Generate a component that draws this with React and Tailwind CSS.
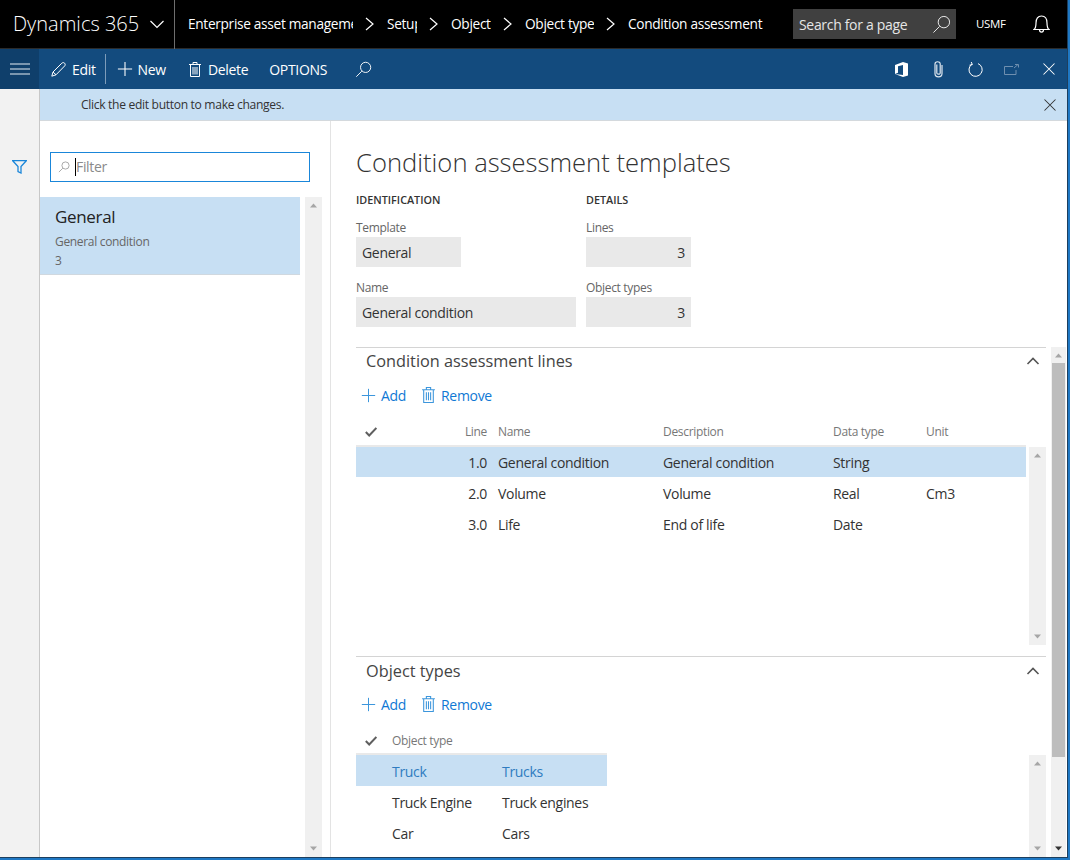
import React from "react";

const Mag = ({ size = 20, color = "currentColor", sw = 1.2 }) => (
  <svg width={size} height={size} viewBox="0 0 20 20" fill="none" stroke={color} strokeWidth={sw} className="shrink-0">
    <circle cx="12.5" cy="7.5" r="6" />
    <path d="M8 12 L1.5 18.5" />
  </svg>
);
const Plus = ({ size = 18, color = "currentColor" }) => (
  <svg width={size} height={size} viewBox="0 0 18 18" stroke={color} strokeWidth="1.2" className="shrink-0">
    <path d="M9 1 V17 M1 9 H17" />
  </svg>
);
const Trash = ({ color = "currentColor", w = 12, h = 15 }) => (
  <svg width={w} height={h} viewBox="0 0 12 15" fill="none" stroke={color} strokeWidth="1" className="shrink-0">
    <path d="M0 2.5 H12 M4 2.5 V0.5 H8 V2.5 M1.5 2.5 V14.5 H10.5 V2.5 M4 5 V12.5 M6 5 V12.5 M8 5 V12.5" />
  </svg>
);
const Pencil = () => (
  <svg width="15" height="15" viewBox="0 0 15 15" fill="none" stroke="#fff" strokeWidth="1" className="shrink-0">
    <path d="M0.8 14.2 L2 10 L10.8 1.2 C11.8 0.4 12.8 0.4 13.6 1.2 C14.4 2 14.4 3.2 13.6 4 L5 12.8 Z M2 10 L5 12.8" />
  </svg>
);
const Chevron = ({ dir = "right", size = 14, color = "#fff", sw = 1.2 }) => (
  <svg width={size} height={size} viewBox="0 0 14 14" fill="none" stroke={color} strokeWidth={sw} className="shrink-0">
    {dir === "right" && <path d="M3 1 L10 7 L3 13" />}
    {dir === "down" && <path d="M0.5 4 L7 10.5 L13.5 4" />}
    {dir === "up" && <path d="M1.5 10 L7 4.5 L12.5 10" />}
  </svg>
);
const Close = ({ size = 12, color = "#fff" }) => (
  <svg width={size} height={size} viewBox="0 0 12 12" stroke={color} strokeWidth="1.05" className="shrink-0">
    <path d="M0.5 0.5 L11.5 11.5 M11.5 0.5 L0.5 11.5" />
  </svg>
);
const Check = () => (
  <svg width="12" height="10" viewBox="0 0 12 10" fill="none" stroke="#5f5f5f" strokeWidth="2" className="shrink-0">
    <path d="M0.8 5 L4.2 8.5 L11.4 1" />
  </svg>
);
const Tri = ({ up = true, color = "#a6a6a6" }) => (
  <svg width="7" height="5" viewBox="0 0 7 5" fill={color} className="shrink-0">
    {up ? <path d="M3.5 0.5 L7 4.5 H0 Z" /> : <path d="M0 0.5 H7 L3.5 4.5 Z" />}
  </svg>
);

const Crumb = ({ w, children }) => (
  <>
    <span className={`${w} overflow-hidden whitespace-nowrap shrink-0`}>{children}</span>
    <Chevron />
  </>
);

const Scroll = ({ className = "" }) => (
  <div className={`w-[17px] bg-[#f0f0f0] flex flex-col items-center justify-between py-[6px] shrink-0 ${className}`}>
    <Tri />
    <Tri up={false} />
  </div>
);

const Field = ({ label, value, w, right }) => (
  <div className="flex flex-col">
    <label className="text-[12px] leading-[20px] h-[19px] text-[#666666]">{label}</label>
    <div className={`${w} h-[30px] bg-[#e9e9e9] flex items-center px-[6px] text-[14px] text-[#333333] ${right ? "justify-end pr-[6px]" : ""}`}>
      {value}
    </div>
  </div>
);

const Toolbar = ({ className = "" }) => (
  <div className={`h-[30px] shrink-0 flex items-center pl-[5px] text-[14px] text-[#1078d4] ${className}`}>
    <Plus size={15} color="#3c96dc" />
    <span className="ml-[5px]">Add</span>
    <span className="ml-[16px]"><Trash color="#3c96dc" w={13} h={16} /></span>
    <span className="ml-[6px]">Remove</span>
  </div>
);

const lines = [
  ["1.0", "General condition", "General condition", "String", ""],
  ["2.0", "Volume", "Volume", "Real", "Cm3"],
  ["3.0", "Life", "End of life", "Date", ""],
];

const LineRow = ({ r, sel }) => (
  <div className={`flex items-center text-[14px] text-[#333333] ${sel ? "h-[30px] mb-[1px] bg-[#c7dff3]" : "h-[31px]"}`}>
    <span className="w-[131px] text-right shrink-0">{r[0]}</span>
    <span className="w-[176px] pl-[11px] shrink-0">{r[1]}</span>
    <span className="w-[170px] shrink-0">{r[2]}</span>
    <span className="w-[93px] shrink-0">{r[3]}</span>
    <span>{r[4]}</span>
  </div>
);

const types = [
  ["Truck", "Trucks"],
  ["Truck Engine", "Truck engines"],
  ["Car", "Cars"],
];

export default function App() {
  return (
    <div className="w-[1070px] h-[860px] overflow-hidden border-r-2 border-b-2 border-[#1f78c4]">
      <div
        className="h-full flex flex-col bg-white border-r border-b border-[#1d3f5e]"
        style={{ fontFamily: '"Open Sans", "Noto Sans", sans-serif', letterSpacing: "-0.02em" }}
      >
        {/* top bar */}
        <header className="h-[49px] shrink-0 bg-black border-b border-[#2b2b2b] flex items-center text-white">
          <div className="w-[175px] h-[49px] shrink-0 border-r border-[#6e6e6e] flex items-center pl-[13px] gap-[11px]">
            <span className="text-[20px] font-light whitespace-nowrap tracking-normal">Dynamics 365</span>
            <Chevron dir="down" />
          </div>
          <nav className="flex items-center text-[13.7px] pl-[13px] gap-[10px] flex-1">
            <Crumb w="w-[165px]">Enterprise asset management</Crumb>
            <Crumb w="w-[30px]">Setup</Crumb>
            <Crumb w="w-[40px]">Object</Crumb>
            <Crumb w="w-[69px]">Object types</Crumb>
            <span className="whitespace-nowrap">Condition assessment</span>
          </nav>
          <div className="w-[163px] h-[30px] bg-[#404040] flex items-center justify-between pl-[6px] pr-[5px] text-[14px] text-[#e6e6e6] mr-[20px] shrink-0">
            <span>Search for a page</span>
            <Mag size={19} color="#f0f0f0" sw={1} />
          </div>
          <span className="text-[11.5px] w-[30px] mr-[27px] shrink-0">USMF</span>
          <svg width="17" height="19" viewBox="0 0 17 19" fill="none" stroke="#fff" strokeWidth="1.2" className="mr-[17px] shrink-0">
            <path d="M1 14.5 C3 13 3 11 3 8 C3 4 5 1 8.5 1 C12 1 14 4 14 8 C14 11 14 13 16 14.5 Z M6.5 14.5 C6.5 18 10.5 18 10.5 14.5" />
          </svg>
        </header>

        {/* command bar */}
        <div className="h-[40px] shrink-0 bg-[#134b7e] flex items-center text-white text-[14px]">
          <div className="w-[39px] h-full bg-[#0f3f6b] flex items-center justify-center shrink-0">
            <svg width="20" height="12" viewBox="0 0 20 12" stroke="#e6edf4" strokeWidth="1.2"><path d="M0 1 H20 M0 6 H20 M0 11 H20" /></svg>
          </div>
          <div className="flex items-center pl-[12px] gap-[6px]">
            <Pencil />
            <span>Edit</span>
          </div>
          <div className="w-px h-[30px] bg-[#7d9cba] ml-[9px] mr-[11px]" />
          <Plus size={16} color="#fff" />
          <span className="ml-[5px]">New</span>
          <span className="ml-[23px]"><Trash color="#fff" /></span>
          <span className="ml-[7px]">Delete</span>
          <span className="ml-[21px]">OPTIONS</span>
          <span className="ml-[28px]"><Mag size={17} color="#fff" sw={1.1} /></span>
          <div className="flex-1" />
          <svg width="13" height="15" viewBox="0 0 13 15" fill="#fff" className="mr-[26px] shrink-0">
            <path d="M0 3 L8 0 L13 1.5 V13.5 L8 15 L0 12 L8 13 V3 L3 4.2 V10.8 L0 12 Z" />
          </svg>
          <svg width="9" height="17" viewBox="0 0 9 17" fill="none" stroke="#dfe7ef" strokeWidth="1.2" className="mr-[25px] shrink-0">
            <path d="M2.8 3.5 V12 C2.8 13.6 6.2 13.6 6.2 12 V3 C6.2 0 1 0 1 3 V12.5 C1 17 8 17 8 12.5 V4" />
          </svg>
          <svg width="15" height="15" viewBox="0 0 15 15" fill="none" stroke="#fff" strokeWidth="1" className="mr-[21px] shrink-0">
            <path d="M4 2.2 A6.6 6.6 0 1 0 10 1.6 M3.2 0 L4.4 2.6 L1.5 3.2" />
          </svg>
          <svg width="15" height="11" viewBox="0 0 15 11" fill="none" stroke="#6f8faf" strokeWidth="1" className="mr-[24px] shrink-0">
            <path d="M9 2.5 H0.5 V10.5 H12 V6 M10 4 L14 0.5 M11 0.5 H14.5 V3.5" />
          </svg>
          <span className="mr-[12px]"><Close size={12} color="#fff" /></span>
        </div>

        <div className="flex-1 min-h-0 flex overflow-hidden">
          {/* rail */}
          <aside className="w-[40px] shrink-0 bg-[#f2f2f2] border-r border-[#c8c8c8] flex justify-center pt-[71px]">
            <svg width="15" height="14" viewBox="0 0 15 14" fill="none" stroke="#1a86d9" strokeWidth="1.3">
              <path d="M0.7 0.7 H14.3 L9 6.5 V13 L6 11.5 V6.5 Z" />
            </svg>
          </aside>

          <div className="flex-1 min-w-0 flex flex-col">
            {/* message bar */}
            <div className="h-[32px] shrink-0 bg-[#c7dff3] border-b border-[#d4d9dd] flex items-center justify-between pl-[41px] pr-[11px] text-[12.1px] text-[#333333]">
              <span className="pt-[1px]">Click the edit button to make changes.</span>
              <Close size={12} color="#333333" />
            </div>

            <div className="flex-1 min-h-0 flex">
              {/* list pane */}
              <section className="w-[291px] shrink-0 border-r border-[#e3e3e3] flex flex-col">
                <div className="h-[76px] shrink-0 pt-[31px] pl-[10px]">
                  <div className="w-[260px] h-[30px] border border-[#1a86d9] flex items-center pl-[7px] pb-[1px] text-[14px] text-[#8a8a8a]">
                    <Mag size={12} color="#8a8a8a" sw={1.2} />
                    <span className="w-px h-[18px] bg-black ml-[5px] mr-0" />
                    <span>Filter</span>
                  </div>
                </div>
                <div className="flex-1 min-h-0 flex">
                  <div className="w-[260px] shrink-0">
                    <div className="h-[78px] bg-[#c7dff3] border-b border-[#d0d8df] pl-[15px] flex flex-col pt-[8px]">
                      <span className="text-[17px] leading-[24px] text-[#222222]">General</span>
                      <span className="text-[12px] leading-[20px] mt-[3px] text-[#666666]">General condition</span>
                      <span className="text-[12px] leading-[18px] text-[#666666]">3</span>
                    </div>
                  </div>
                  <Scroll className="ml-[5px]" />
                </div>
              </section>

              {/* main */}
              <main className="flex-1 min-w-0 flex flex-col pl-[25px]">
                <div className="h-[226px] shrink-0 flex flex-col">
                  <h1 className="text-[25.6px] leading-[38px] mt-[23px] font-light text-[#333333] tracking-normal whitespace-nowrap">Condition assessment templates</h1>
                  <div className="flex mt-[10px]">
                    <div className="w-[230px] flex flex-col">
                      <h2 className="text-[10.8px] leading-[16px] h-[26px] font-semibold text-[#333333] tracking-normal">IDENTIFICATION</h2>
                      <Field label="Template" value="General" w="w-[105px]" />
                      <div className="h-[11px]" />
                      <Field label="Name" value="General condition" w="w-[220px]" />
                    </div>
                    <div className="flex flex-col">
                      <h2 className="text-[10.8px] leading-[16px] h-[26px] font-semibold text-[#333333] tracking-normal">DETAILS</h2>
                      <Field label="Lines" value="3" w="w-[105px]" right />
                      <div className="h-[11px]" />
                      <Field label="Object types" value="3" w="w-[105px]" right />
                    </div>
                  </div>
                </div>

                <div className="flex-1 min-h-0 flex">
                  <div className="w-[690px] shrink-0 flex flex-col">
                    {/* lines section */}
                    <section className="h-[309px] shrink-0 border-t border-[#d4d4d4] flex flex-col">
                      <div className="h-[26px] shrink-0 flex items-center justify-between pl-[10px] pr-[6px] text-[16.3px] text-[#444444] tracking-normal">
                        <span>Condition assessment lines</span>
                        <Chevron dir="up" size={14} color="#555555" sw={1.6} />
                      </div>
                      <Toolbar className="mt-[6px]" />
                      <div className="h-[37px] pt-[8px] shrink-0 flex items-center text-[12px] text-[#777777] border-b-2 border-[#e9e9e9] w-[670px]">
                        <span className="w-[30px] pl-[9px] shrink-0"><Check /></span>
                        <span className="w-[101px] text-right shrink-0">Line</span>
                        <span className="w-[176px] pl-[11px] shrink-0">Name</span>
                        <span className="w-[170px] shrink-0">Description</span>
                        <span className="w-[93px] shrink-0">Data type</span>
                        <span>Unit</span>
                      </div>
                      <div className="flex-1 min-h-0 flex">
                        <div className="w-[670px] shrink-0">
                          {lines.map((r, i) => <LineRow key={r[0]} r={r} sel={i === 0} />)}
                        </div>
                        <Scroll className="ml-[3px] mb-[11px]" />
                      </div>
                    </section>

                    {/* object types section */}
                    <section className="flex-1 min-h-0 border-t border-[#d4d4d4] flex flex-col">
                      <div className="h-[28px] shrink-0 flex items-center justify-between pl-[10px] pr-[6px] text-[16.3px] text-[#444444] tracking-normal">
                        <span>Object types</span>
                        <Chevron dir="up" size={14} color="#555555" sw={1.6} />
                      </div>
                      <Toolbar className="mt-[4px]" />
                      <div className="h-[36px] pt-[9px] shrink-0 flex items-center text-[12px] text-[#777777] border-b-2 border-[#e9e9e9] w-[251px]">
                        <span className="w-[36px] pl-[9px] shrink-0"><Check /></span>
                        <span>Object type</span>
                      </div>
                      <div className="flex-1 min-h-0 flex">
                        <div className="w-[670px] shrink-0">
                          {types.map((r, i) => (
                            <div key={r[0]} className={`h-[31px] pt-[1px] w-[251px] flex items-center text-[14px] ${i === 0 ? "bg-[#c7dff3] text-[#2f7cc0]" : "text-[#333333]"}`}>
                              <span className="w-[146px] pl-[36px] shrink-0">{r[0]}</span>
                              <span className="whitespace-nowrap">{r[1]}</span>
                            </div>
                          ))}
                        </div>
                        <Scroll className="ml-[3px]" />
                      </div>
                    </section>
                  </div>

                  {/* page scrollbar */}
                  <div className="w-[15px] ml-[5px] shrink-0 bg-[#f0f0f0] flex flex-col items-center pt-[6px] pb-[6px]">
                    <Tri />
                    <div className="w-[13px] h-[394px] bg-[#bdbdbd] mt-[5px]" />
                    <div className="flex-1" />
                    <Tri up={false} color="#333333" />
                  </div>
                </div>
              </main>
            </div>
          </div>
        </div>
      </div>
    </div>
  );
}
